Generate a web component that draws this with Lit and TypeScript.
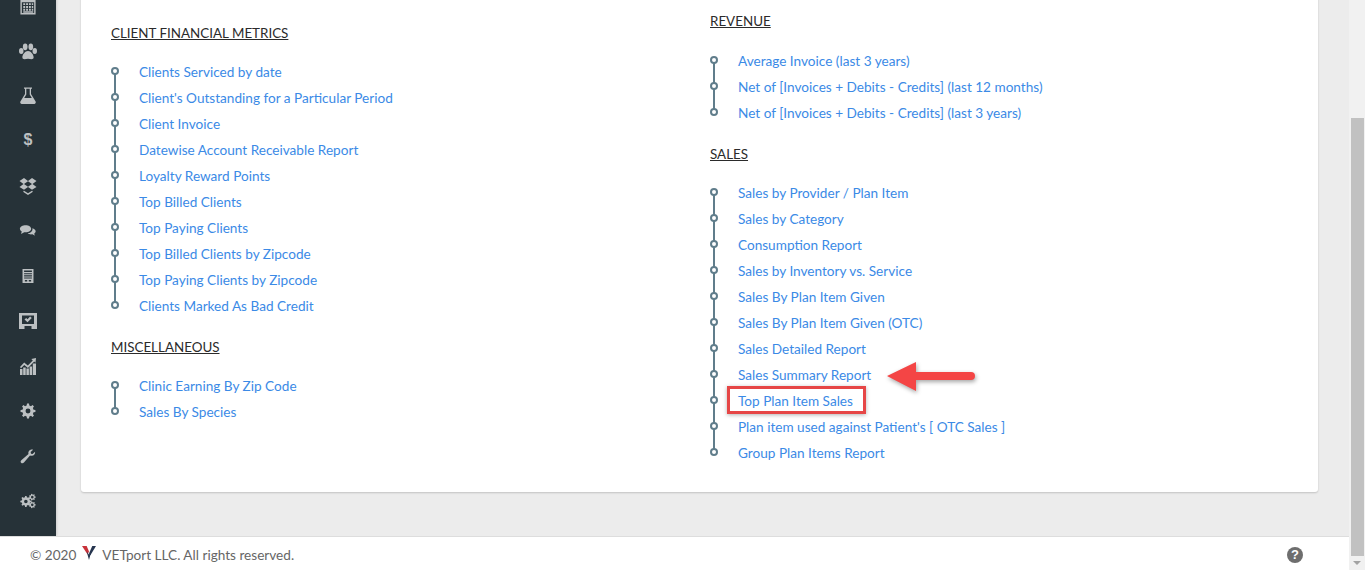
import { LitElement, html, css, svg } from 'lit';
import { customElement } from 'lit/decorators.js';

// builds a gear outline, used by the settings icons
function gear(cx: number, cy: number, r: number, hole: number, teeth: number) {
  const outer = r;
  const inner = r * 0.76;
  const step = (Math.PI * 2) / teeth;
  let d = '';
  for (let i = 0; i < teeth; i++) {
    const a = i * step;
    const pts: [number, number][] = [
      [a - step * 0.3, inner],
      [a - step * 0.17, outer],
      [a + step * 0.17, outer],
      [a + step * 0.3, inner],
    ];
    for (const [t, rad] of pts) {
      d += `${d ? 'L' : 'M'}${(cx + Math.cos(t) * rad).toFixed(2)} ${(cy + Math.sin(t) * rad).toFixed(2)}`;
    }
  }
  d += `ZM${cx + hole} ${cy}A${hole} ${hole} 0 1 0 ${cx - hole} ${cy}A${hole} ${hole} 0 1 0 ${cx + hole} ${cy}Z`;
  return d;
}

const icons = [
  {
    vb: '-0.5 -0.5 19 19',
    g: svg`<path fill-rule="evenodd" d="M1 0h16v18H1zM2.500 5v11.500h13V5z"/><path d="M4 6h2v2H4zM7 6h2v2H7zM10 6h2v2h-2zM13 6h1.500v2H13zM4 9h2v2H4zM7 9h2v2H7zM10 9h2v2h-2zM13 9h1.500v2H13zM4 12h2v2H4zM7 12h2v2H7zM10 12h2v2h-2zM13 12h1.500v2H13zM4 14.500h10.500V16H4z"/>`,
  },
  {
    vb: '1 0 16 16',
    g: svg`<ellipse cx="3" cy="8" rx="2" ry="2.600"/><ellipse cx="15" cy="8" rx="2" ry="2.600"/><ellipse cx="6.500" cy="4.300" rx="2.100" ry="3"/><ellipse cx="11.500" cy="4.300" rx="2.100" ry="3"/><path d="M9 8c2.500 0 5 3.200 5 5.600 0 2.200-2.400 1.700-5 1.200-2.600.5-5 1-5-1.200C4 11.200 6.500 8 9 8z"/>`,
  },
  {
    vb: '0 0 18 18',
    g: svg`<path d="M5 .5h8v1.300h-1V7l4.600 7.600c.6 1.100-.1 2.400-1.400 2.400H2.800c-1.300 0-2-1.300-1.400-2.400L6 7V1.800H5zM7.300 1.800v5.600L5.200 11h7.600l-2.100-3.600V1.800z"/>`,
  },
  null,
  {
    vb: '0 0 18 18',
    g: svg`<path d="M5 1 .5 4 4.500 7 .5 10l4.500 2.800 4-2.800 4 2.800 4.500-2.800-4-3 4-3L13 1 9 4zM9 4.300 13 7 9 9.700 5 7zM5 13.700l4 2.600 4-2.600.6.400v1L9 18l-4.600-2.900v-1z"/>`,
  },
  {
    vb: '-1 -1 20 20',
    g: svg`<path d="M6.500 2.500c3.300 0 6 1.700 6 4s-2.700 4-6 4c-.6 0-1.200 0-1.800-.2C3.600 11.200 2.300 11.700 1 12c.6-.8 1-1.600 1.100-2.400C.8 8.800 0 7.700 0 6.500c0-2.300 3-4 6.500-4z"/><path d="M13.800 6c2.100.4 3.700 1.800 3.700 3.400 0 1-.6 1.900-1.600 2.600.1.700.5 1.400 1 2-1.100-.2-2.100-.7-3-1.400-.5.1-1 .2-1.500.2-1.500 0-2.900-.5-3.800-1.300 3-.1 5.400-2.100 5.400-4.500z"/>`,
  },
  {
    vb: '-2.500 -2.500 23 23',
    g: svg`<path fill-rule="evenodd" d="M2 0h14v18H2zM4 2v2h10V2zM4 5.500v1.300h10V5.500zM4 8.200v1.300h10V8.200zM4 11v1.300h10V11zM5 14.200v1.800h3v-1.800zM10 14.200v1.800h3v-1.800z"/>`,
  },
  {
    vb: '0 -1 18 18',
    g: svg`<path fill-rule="evenodd" d="M0 0h18v16H0zM3 2.500v8.500h12V2.500zM5.500 13v3h7v-3z"/><path d="m5.500 6.500 1.700-1.600 1.300 1.300 2.600-2.700L12.800 5l-4.300 4.300z"/>`,
  },
  {
    vb: '0 -1 18 18',
    g: svg`<path d="M1 11h2.500v6H1zM4.200 9.500h2.500V17H4.200zM7.400 10.500h2.500V17H7.400zM10.600 8.500h2.500V17h-2.500zM13.800 5.500h3.200V17h-3.200z"/><path d="m1 9 4.200-4.400 3.600 3 5-5.100-1.500-1.500L17 0l-.5 4.700-1.300-1.300-6.300 6.500-3.600-3L2 10.300z"/>`,
  },
  {
    vb: '-1.200 -1.200 20.400 20.400',
    g: svg`<path fill-rule="evenodd" d="${gear(9, 9, 8.5, 2.8, 8)}"/>`,
  },
  {
    vb: '-1.200 -1.200 20.400 20.400',
    g: svg`<path fill-rule="evenodd" d="M17 4.200c.5 2.600-1.600 5-4.300 4.600-.5-.1-1-.2-1.400-.5L4.400 16.500c-1 1.100-2.500 1-3.200.2-.8-.8-.8-2.100.2-3L9.600 6.600c-.8-2.500 1.200-5.100 3.700-5.100.5 0 1 .1 1.500.3L12 4.600l.4 1.800 1.800.4z"/>`,
  },
  {
    vb: '-1.500 -1.500 21 21',
    g: svg`<path fill-rule="evenodd" d="${gear(6.5, 9.5, 6.5, 2.1, 8)}"/><path fill-rule="evenodd" d="${gear(14, 4.5, 4, 1.5, 7)}"/><path fill-rule="evenodd" d="${gear(14, 13.5, 4, 1.5, 7)}"/>`,
  },
];

const clientMetrics = [
  'Clients Serviced by date',
  "Client's Outstanding for a Particular Period",
  'Client Invoice',
  'Datewise Account Receivable Report',
  'Loyalty Reward Points',
  'Top Billed Clients',
  'Top Paying Clients',
  'Top Billed Clients by Zipcode',
  'Top Paying Clients by Zipcode',
  'Clients Marked As Bad Credit',
];
const misc = ['Clinic Earning By Zip Code', 'Sales By Species'];
const revenue = [
  'Average Invoice (last 3 years)',
  'Net of [Invoices + Debits - Credits] (last 12 months)',
  'Net of [Invoices + Debits - Credits] (last 3 years)',
];
const sales = [
  'Sales by Provider / Plan Item',
  'Sales by Category',
  'Consumption Report',
  'Sales by Inventory vs. Service',
  'Sales By Plan Item Given',
  'Sales By Plan Item Given (OTC)',
  'Sales Detailed Report',
  'Sales Summary Report',
  'Top Plan Item Sales',
  "Plan item used against Patient's [ OTC Sales ]",
  'Group Plan Items Report',
];

@customElement('app-root')
export class AppRoot extends LitElement {
  static styles = css`
    :host {
      display: flex;
      width: 1365px;
      height: 570px;
      overflow: hidden;
      background: #ececec;
      font-family: 'Lato', 'Liberation Sans', sans-serif;
      font-size: 13.6px;
    }

    .page {
      flex: 1;
      min-width: 0;
      display: flex;
      flex-direction: column;
    }

    .body {
      flex: 1;
      min-height: 0;
      display: flex;
      overflow: hidden;
    }

    .sidebar {
      width: 56px;
      flex: none;
      background: #263238;
      box-shadow: 1px 0 2px rgba(0, 0, 0, 0.12);
      display: flex;
      flex-direction: column;
      align-items: center;
      gap: 27px;
      margin-top: -3px;
    }

    .sidebar .ic {
      width: 18px;
      height: 18px;
      display: flex;
      align-items: center;
      justify-content: center;
      color: #bcc0c2;
    }

    .sidebar svg {
      width: 18px;
      height: 18px;
      fill: currentColor;
    }

    .dollar {
      font: bold 16px 'Liberation Sans', sans-serif;
      margin-top: -2px;
    }

    .content {
      flex: 1;
      min-width: 0;
      padding: 0 31px 0 25px;
    }

    .card {
      background: #fff;
      border-radius: 3px;
      box-shadow: 0 1px 2px rgba(0, 0, 0, 0.18);
      margin-top: -20px;
      height: 512px;
      box-sizing: border-box;
      padding: 31px 30px 26px;
      display: grid;
      grid-template-columns: 599px 1fr;
    }

    .col.left {
      padding-top: 12px;
    }

    h4 {
      margin: 0 0 16px;
      font-size: 13.4px;
      line-height: 20px;
      font-weight: 400;
      color: #2b2b2b;
      text-decoration: underline;
    }

    .col.right h4:first-child {
      margin-bottom: 17px;
    }

    ul {
      list-style: none;
      margin: 0 0 18px;
      padding: 0;
    }

    li {
      position: relative;
      height: 26px;
      line-height: 26px;
      padding-left: 28px;
      color: #3b8ae6;
      white-space: nowrap;
    }

    li::before {
      content: '';
      position: absolute;
      left: 0;
      top: 8px;
      width: 4px;
      height: 4px;
      border: 2px solid #607d8b;
      border-radius: 50%;
      background: #fff;
      z-index: 1;
    }

    li::after {
      content: '';
      position: absolute;
      left: 3px;
      top: 14px;
      width: 2px;
      height: 26px;
      background: #607d8b;
    }

    li:last-child::after {
      display: none;
    }

    .boxed {
      position: absolute;
      left: 17px;
      top: -2px;
      width: 133px;
      height: 22px;
      border: 3px solid #e64646;
      box-shadow: 0 1px 4px rgba(0, 0, 0, 0.3);
      pointer-events: none;
    }

    .arrow {
      position: absolute;
      left: 177px;
      top: -1px;
      width: 92px;
      height: 36px;
      pointer-events: none;
      overflow: visible;
      filter: drop-shadow(1px 2px 2px rgba(0, 0, 0, 0.35));
    }

    footer {
      height: 34px;
      flex: none;
      box-sizing: border-box;
      border-top: 1px solid #ddd;
      background: #fff;
      display: flex;
      align-items: center;
      padding: 3px 46px 0 30px;
      color: #666;
      gap: 6px;
    }

    footer .grow {
      flex: 1;
    }

    .logo {
      width: 14px;
      height: 14px;
      margin-top: -5px;
    }

    .help {
      width: 16px;
      height: 16px;
      border-radius: 50%;
      background: #6e6e6e;
      color: #fff;
      font: bold 13px/16px 'Liberation Sans', sans-serif;
      text-align: center;
    }

    .scroll {
      width: 16px;
      flex: none;
      background: #f1f1f1;
      display: flex;
      flex-direction: column;
    }

    .thumb {
      margin: 118px 1px 0 2px;
      height: 438px;
      background: #c1c1c1;
    }

    .down {
      margin: 5px auto 0;
      width: 0;
      height: 0;
      border: 4px solid transparent;
      border-top: 4px solid #a3a3a3;
      border-bottom: 0;
    }
  `;

  private renderItem(text: string) {
    const boxed = text === 'Top Plan Item Sales';
    const arrow = text === 'Sales Summary Report';
    return html`<li>
      ${text}
      ${boxed ? html`<span class="boxed"></span>` : ''}
      ${arrow
        ? html`<svg class="arrow" viewBox="0 0 92 36">
            <path d="M0 15 29 1v10h55a4 4 0 0 1 0 8H29v11z" fill="#f44545" />
          </svg>`
        : ''}
    </li>`;
  }

  private renderList(title: string, items: string[]) {
    return html`<h4>${title}</h4>
      <ul>
        ${items.map((t) => this.renderItem(t))}
      </ul>`;
  }

  render() {
    return html`
      <div class="page">
        <div class="body">
          <nav class="sidebar">
            ${icons.map(
              (ic) => html`<span class="ic">
                ${ic ? html`<svg viewBox=${ic.vb}>${ic.g}</svg>` : html`<span class="dollar">$</span>`}
              </span>`
            )}
          </nav>
          <main class="content">
            <div class="card">
              <div class="col left">
                ${this.renderList('CLIENT FINANCIAL METRICS', clientMetrics)}
                ${this.renderList('MISCELLANEOUS', misc)}
              </div>
              <div class="col right">
                ${this.renderList('REVENUE', revenue)}
                ${this.renderList('SALES', sales)}
              </div>
            </div>
          </main>
        </div>
        <footer>
          <span>© 2020</span>
          <svg class="logo" viewBox="0 0 15 15">
            <path d="M0 0h5l2.500 6L6 9z" fill="#c8313a" />
            <path d="M15 0h-4L7.500 8 9 10z" fill="#26354f" />
            <path d="M5 6l2.500 9L10 6 7.500 9z" fill="#26354f" />
          </svg>
          <span>VETport LLC. All rights reserved.</span>
          <span class="grow"></span>
          <span class="help">?</span>
        </footer>
      </div>
      <div class="scroll">
        <div class="thumb"></div>
        <div class="down"></div>
      </div>
    `;
  }
}
